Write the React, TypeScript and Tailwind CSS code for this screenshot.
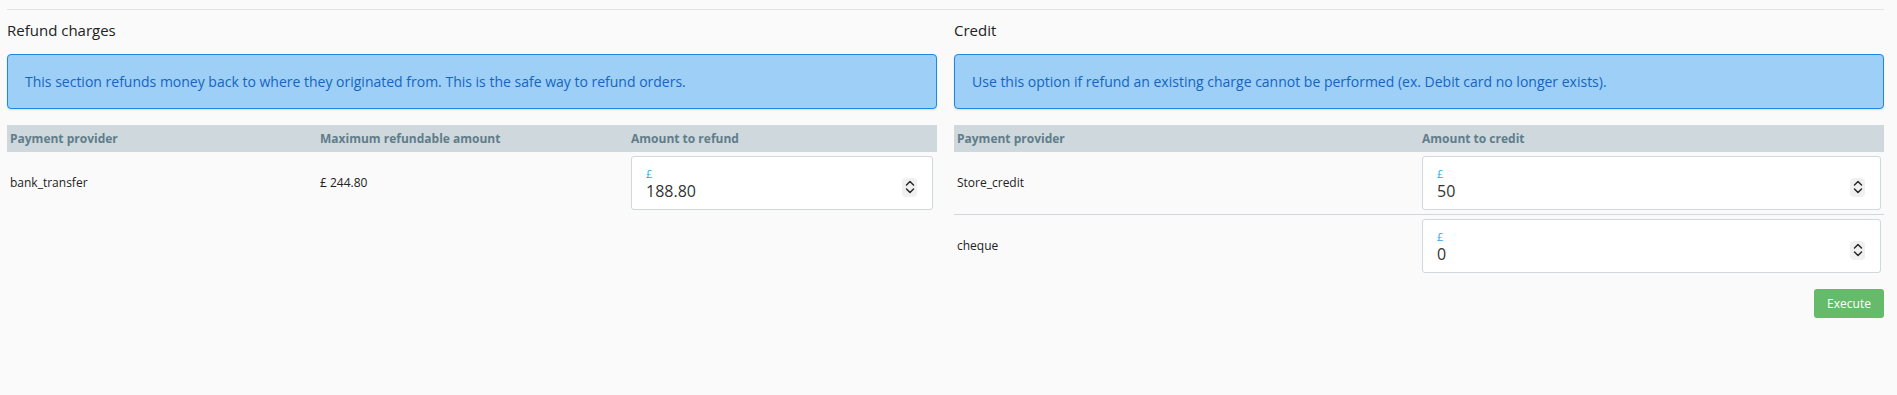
import React from "react";

type RefundRow = { provider: string; max: string; amount: string };
type CreditRow = { provider: string; amount: string };

const refundRows: RefundRow[] = [
  { provider: "bank_transfer", max: "£ 244.80", amount: "188.80" },
];

const creditRows: CreditRow[] = [
  { provider: "Store_credit", amount: "50" },
  { provider: "cheque", amount: "0" },
];

function Spinner() {
  return (
    <div className="w-[15px] h-[19px] rounded-[4px] bg-[#f0f0f0] flex items-center justify-center">
      <svg width="12" height="16" viewBox="0 0 12 16" fill="none">
        <path d="M2.5 6 L6 2.5 L9.5 6" stroke="#2a2a2a" strokeWidth="1.5" strokeLinecap="round" strokeLinejoin="round" />
        <path d="M2.5 10 L6 13.5 L9.5 10" stroke="#2a2a2a" strokeWidth="1.5" strokeLinecap="round" strokeLinejoin="round" />
      </svg>
    </div>
  );
}

function MoneyInput({ value }: { value: string }) {
  return (
    <div className="h-[54px] bg-white border border-[#cfd8dc] rounded-[3px] pl-[14px] pr-[15px] flex items-center">
      <div className="flex-1 flex flex-col pt-[2px]">
        <span className="text-[11px] leading-[14px] text-[#29a9f1]">£</span>
        <span className="text-[16px] leading-[20px] text-[#333]">{value}</span>
      </div>
      <div className="pt-[8px]">
        <Spinner />
      </div>
    </div>
  );
}

function Alert({ text }: { text: string }) {
  return (
    <div className="h-[55px] flex items-center px-[17px] bg-[#9dcff7] border border-[#1e88e5] rounded-[4px] shadow-[0_1px_2px_rgba(0,0,0,0.12)] text-[14px] text-[#1565c0]">
      {text}
    </div>
  );
}

function Title({ text }: { text: string }) {
  return (
    <div className="h-[44px] pb-[4px] flex items-center text-[15px] text-[#222]">{text}</div>
  );
}

export default function App() {
  return (
    <div className="min-h-screen bg-[#fafafa] font-['Open_Sans',sans-serif] pl-[7px] pr-[13px] pt-[9px]">
      <div className="border-t border-[#e3e3e3]" />
      <div className="grid grid-cols-2 gap-[17px]">
        <section>
          <Title text="Refund charges" />
          <Alert text="This section refunds money back to where they originated from. This is the safe way to refund orders." />
          <div className="mt-[16px]">
            <div className="grid grid-cols-3 h-[27px] items-center bg-[#cfd8dc] text-[12px] font-bold text-[#607d8b]">
              <div className="px-[3px]">Payment provider</div>
              <div className="px-[3px]">Maximum refundable amount</div>
              <div className="px-[4px]">Amount to refund</div>
            </div>
            {refundRows.map((row, i) => (
              <div key={i} className="grid grid-cols-3 items-center text-[12px] text-[#222]">
                <div className="px-[3px]">{row.provider}</div>
                <div className="px-[3px]">{row.max}</div>
                <div className="p-[4px]">
                  <MoneyInput value={row.amount} />
                </div>
              </div>
            ))}
          </div>
        </section>
        <section>
          <Title text="Credit" />
          <Alert text="Use this option if refund an existing charge cannot be performed (ex. Debit card no longer exists)." />
          <div className="mt-[16px]">
            <div className="grid grid-cols-2 h-[27px] items-center bg-[#cfd8dc] text-[12px] font-bold text-[#607d8b]">
              <div className="px-[3px]">Payment provider</div>
              <div className="px-[3px]">Amount to credit</div>
            </div>
            {creditRows.map((row, i) => (
              <div
                key={i}
                className={
                  i > 0
                    ? "grid grid-cols-2 items-center text-[12px] text-[#222] border-t border-[#cfd8dc]"
                    : "grid grid-cols-2 items-center text-[12px] text-[#222]"
                }
              >
                <div className="px-[3px]">{row.provider}</div>
                <div className="px-[3px] py-[4px]">
                  <MoneyInput value={row.amount} />
                </div>
              </div>
            ))}
            <div className="flex justify-end mt-[12px]">
              <button className="h-[29px] w-[70px] rounded-[3px] bg-[#66bb6a] text-white text-[12px]">
                Execute
              </button>
            </div>
          </div>
        </section>
      </div>
    </div>
  );
}
